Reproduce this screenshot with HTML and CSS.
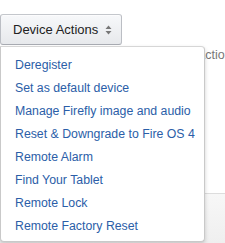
FILE: index.html
```html
<!DOCTYPE html>
<html lang="en">
<head>
    <meta charset="UTF-8">
    <meta name="viewport" content="width=device-width, initial-scale=1.0">
    <title>Device Actions</title>
    <link rel="stylesheet" href="styles.css">
</head>
<body>
    <div class="page">
        <div class="toolbar">
            <button class="actions-btn">
                <span>Device Actions</span>
                <svg class="caret" width="7" height="10" viewBox="0 0 7 10">
                    <path d="M3.5 0.5 L6.5 4 L0.5 4 Z M3.5 9.5 L6.5 6 L0.5 6 Z" fill="#777"/>
                </svg>
            </button>
        </div>
        <div class="behind">
            <p class="hint">Actions</p>
        </div>
        <div class="panel"></div>

        <ul class="menu">
            <li><a href="#">Deregister</a></li>
            <li><a href="#">Set as default device</a></li>
            <li><a href="#">Manage Firefly image and audio</a></li>
            <li><a href="#">Reset &amp; Downgrade to Fire OS 4</a></li>
            <li><a href="#">Remote Alarm</a></li>
            <li><a href="#">Find Your Tablet</a></li>
            <li><a href="#">Remote Lock</a></li>
            <li><a href="#">Remote Factory Reset</a></li>
        </ul>
    </div>
</body>
</html>
```

FILE: styles.css
```css
* {
    box-sizing: border-box;
    margin: 0;
    padding: 0;
}

body {
    font-family: "Liberation Sans", Arial, sans-serif;
    font-size: 12.3px;
    color: #333;
    background: #fff;
    overflow: hidden;
}

.page {
    position: relative;
    height: 243px;
    display: flex;
    flex-direction: column;
}

.toolbar {
    padding-top: 14px;
    height: 46px;
}

.actions-btn {
    display: flex;
    align-items: center;
    gap: 7px;
    width: 122px;
    height: 31px;
    padding: 0 0 0 12px;
    font-family: inherit;
    font-size: 13px;
    color: #222;
    background: linear-gradient(#f7f8fa, #e7e9ec);
    border: 1px solid #adb1b8;
    border-color: #c4c7cc #bbbec4 #a9acb3;
    border-radius: 3px;
    box-shadow: 0 1px 0 rgba(255, 255, 255, 0.6) inset;
    cursor: pointer;
}

.caret {
    display: block;
}

.behind {
    height: 147px;
    padding-left: 197px;
    padding-top: 2px;
    overflow: hidden;
}

.hint {
    color: #777;
    font-size: 12.5px;
    white-space: nowrap;
}

.panel {
    flex: 1;
    border-top: 1px solid #ddd;
    background: linear-gradient(#f7f7f7, #efefef);
}

.menu {
    position: absolute;
    top: 46px;
    left: 0;
    width: 205px;
    height: 196px;
    list-style: none;
    padding: 7px 0 4px;
    background: #fff;
    border: 1px solid #c9c9c9;
    border-top-color: #d6d6d6;
    border-radius: 0 4px 4px 4px;
    box-shadow: 0 2px 4px rgba(0, 0, 0, 0.18);
}

.menu li a {
    display: block;
    height: 23px;
    line-height: 23px;
    padding-left: 14px;
    color: #2b5ea8;
    text-decoration: none;
    white-space: nowrap;
}
```
